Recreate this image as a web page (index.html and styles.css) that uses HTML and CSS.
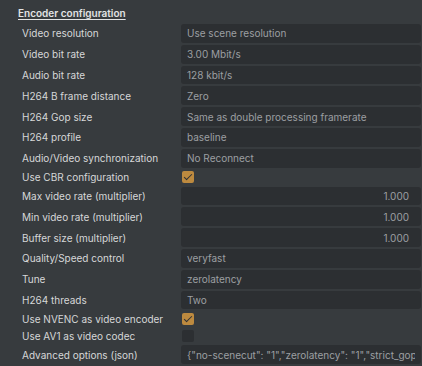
FILE: index.html
```html
<!DOCTYPE html>
<html>
<head>
    <meta charset="UTF-8">
    <title>Encoder configuration</title>
    <link rel="stylesheet" href="styles.css">
</head>
<body>
<div class="panel">
    <div class="panel-title">Encoder configuration</div>
    <div class="form">
        <div class="label">Video resolution</div>
        <div class="field">Use scene resolution</div>

        <div class="label">Video bit rate</div>
        <div class="field">3.00 Mbit/s</div>

        <div class="label">Audio bit rate</div>
        <div class="field">128 kbit/s</div>

        <div class="label">H264 B frame distance</div>
        <div class="field">Zero</div>

        <div class="label">H264 Gop size</div>
        <div class="field">Same as double processing framerate</div>

        <div class="label">H264 profile</div>
        <div class="field">baseline</div>

        <div class="label">Audio/Video synchronization</div>
        <div class="field">No Reconnect</div>

        <div class="label check-row">Use CBR configuration</div>
        <div class="check-row"><span class="checkbox checked"></span></div>

        <div class="label">Max video rate (multiplier)</div>
        <div class="field number">1.000</div>

        <div class="label">Min video rate (multiplier)</div>
        <div class="field number">1.000</div>

        <div class="label">Buffer size (multiplier)</div>
        <div class="field number">1.000</div>

        <div class="label">Quality/Speed control</div>
        <div class="field">veryfast</div>

        <div class="label">Tune</div>
        <div class="field">zerolatency</div>

        <div class="label">H264 threads</div>
        <div class="field">Two</div>

        <div class="label check-row">Use NVENC as video encoder</div>
        <div class="check-row"><span class="checkbox checked"></span></div>

        <div class="label check-row">Use AV1 as video codec</div>
        <div class="check-row"><span class="checkbox"></span></div>

        <div class="label">Advanced options (json)</div>
        <div class="field"><span class="clip">{"no-scenecut": "1","zerolatency": "1","strict_gop": "1","rc-lookahead": "0"}</span></div>
    </div>
</div>
</body>
</html>
```

FILE: styles.css
```css
html, body {
    margin: 0;
    padding: 0;
    background: #373b3e;
}

body {
    font-family: Inter, "Noto Sans", sans-serif;
    font-size: 10px;
    color: #d6d7d8;
    width: 422px;
    height: 366px;
    overflow: hidden;
}

.panel-title {
    padding: 7px 0 0 18px;
    height: 17px;
    line-height: 13px;
    font-weight: 600;
    text-decoration: underline;
    text-underline-offset: 2px;
    color: #e2e3e4;
}

.form {
    display: grid;
    grid-template-columns: 159px 1fr;
    row-gap: 2px;
    padding: 0 1px 0 22px;
}

.label {
    height: 18.8px;
    display: flex;
    align-items: center;
    white-space: nowrap;
}

.field {
    height: 18.8px;
    display: flex;
    align-items: center;
    padding: 0 6px;
    background: #2c2f32;
    border-radius: 3px;
    color: #9c9fa2;
    white-space: nowrap;
    overflow: hidden;
}

.field.number {
    justify-content: flex-end;
    padding-right: 12px;
}

.clip {
    display: block;
    overflow: hidden;
}

.check-row {
    height: 15px;
    display: flex;
    align-items: center;
}

.checkbox {
    width: 12px;
    height: 12px;
    margin-left: 1px;
    border-radius: 2px;
    background: #2c2f32;
    position: relative;
}

.checkbox.checked {
    background: #bd8a3f;
}

.checkbox.checked::after {
    content: "";
    position: absolute;
    left: 4px;
    top: 1px;
    width: 3px;
    height: 7px;
    border: solid #2f3134;
    border-width: 0 1.5px 1.5px 0;
    transform: rotate(45deg);
}
```
